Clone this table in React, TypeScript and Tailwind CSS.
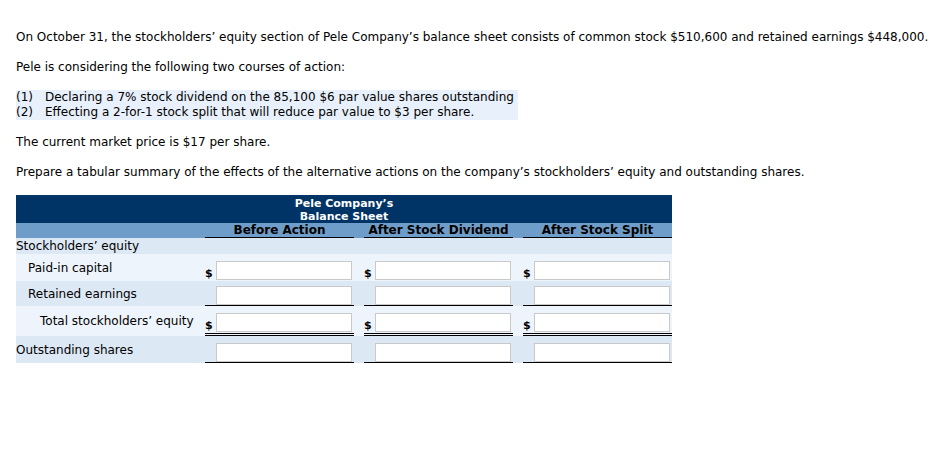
import React from "react";

type Row = {
  label: string;
  indent: string;
  dollar: boolean;
  kind: "single" | "double" | "none";
  bg: string;
  pad: string;
};

const rows: Row[] = [
  { label: "Paid-in capital", indent: "pl-3", dollar: true, kind: "none", bg: "bg-[#eef4fc]", pad: "pt-[7px] pb-[1px]" },
  { label: "Retained earnings", indent: "pl-3", dollar: false, kind: "single", bg: "bg-[#dde8f5]", pad: "pt-[5px]" },
  { label: "Total stockholders’ equity", indent: "pl-6", dollar: true, kind: "double", bg: "bg-[#eef4fc]", pad: "pt-[7px]" },
  { label: "Outstanding shares", indent: "pl-0", dollar: false, kind: "single", bg: "bg-[#dde8f5]", pad: "pt-[7px]" },
];

const Cell = ({ row }: { row: Row }) => {
  const line =
    row.kind === "single"
      ? "border-b border-black"
      : row.kind === "double"
        ? "border-b-[3px] border-double border-black pb-[1px]"
        : "";
  return (
    <div className={`${row.pad} ${row.bg}`}>
      <div className={`flex items-end ${line}`}>
        <span className="w-[11px] text-[11px] font-bold leading-none pb-[1px]">
          {row.dollar ? "$" : ""}
        </span>
        <input
          type="text"
          className="w-[136px] h-[19px] bg-white border border-[#c9c9c9] outline-none"
        />
      </div>
    </div>
  );
};

export default function App() {
  return (
    <div className="min-h-screen bg-white text-black font-['DejaVu_Sans',Verdana,sans-serif] text-[12px] pl-4 pt-[30px]">
      <p className="leading-[15px]">
        On October 31, the stockholders’ equity section of Pele Company’s balance sheet consists of common stock $510,600 and retained earnings $448,000.
      </p>
      <p className="mt-[15px] leading-[15px]">Pele is considering the following two courses of action:</p>
      <div className="mt-[15px] inline-block bg-[#e8f0fb] pr-1 leading-[15px]">
        <div className="flex">
          <span className="w-[29px]">(1)</span>
          <span>Declaring a 7% stock dividend on the 85,100 $6 par value shares outstanding</span>
        </div>
        <div className="flex">
          <span className="w-[29px]">(2)</span>
          <span>Effecting a 2-for-1 stock split that will reduce par value to $3 per share.</span>
        </div>
      </div>
      <p className="mt-[14px] leading-[15px]">The current market price is $17 per share.</p>
      <p className="mt-[15px] leading-[15px]">
        Prepare a tabular summary of the effects of the alternative actions on the company’s stockholders’ equity and outstanding shares.
      </p>

      <div className="mt-[15px] w-[656px]">
        <div className="bg-[#003466] h-[28px] flex flex-col items-center justify-center text-white font-bold text-[11px] leading-[13px] pt-[1px]">
          <span>Pele Company’s</span>
          <span>Balance Sheet</span>
        </div>
        <div className="grid grid-cols-[189px_149px_10px_149px_10px_149px] bg-[#6f9dc9] text-[12px] font-bold leading-[14px]">
          <div />
          <div className="text-center border-b border-black">Before Action</div>
          <div />
          <div className="text-center border-b border-black">After Stock Dividend</div>
          <div />
          <div className="text-center border-b border-black">After Stock Split</div>
        </div>
        <div className="bg-[#dde8f5] h-[16px] leading-[16px]">Stockholders’ equity</div>
        {rows.map((row) => (
          <div key={row.label} className={`grid grid-cols-[189px_149px_10px_149px_10px_149px] ${row.bg}`}>
            <div className={`flex items-center ${row.indent}`}>{row.label}</div>
            <Cell row={row} />
            <div />
            <Cell row={row} />
            <div />
            <Cell row={row} />
          </div>
        ))}
      </div>
    </div>
  );
}
